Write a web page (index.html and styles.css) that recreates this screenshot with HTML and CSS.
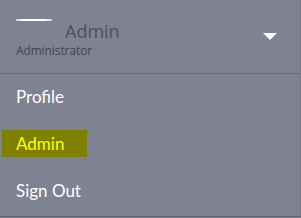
FILE: index.html
```html
<!DOCTYPE html>
<html lang="en">
<head>
  <meta charset="UTF-8" />
  <title>User menu</title>
  <link rel="stylesheet" href="styles.css">
</head>
<body>
<div class="user-menu">
  <div class="user-head">
    <div class="user-row">
      <span class="avatar"></span>
      <span class="user-name">Admin</span>
      <span class="caret"></span>
    </div>
    <div class="user-role">Administrator</div>
  </div>
  <ul class="menu">
    <li><a class="menu-link" href="#">Profile</a></li>
    <li><a class="menu-link active" href="#">Admin</a></li>
    <li><a class="menu-link" href="#">Sign Out</a></li>
  </ul>
</div>
</body>
</html>
```

FILE: styles.css
```css
body {
  margin: 0;
  padding: 0;
  background-color: #7f8290;
  font-family: 'Lato', 'Open Sans', sans-serif;
}
.user-menu {
  width: 300px;
  height: 216px;
  border-right: 1px solid #777a87;
  border-bottom: 1px solid #5e616c;
}
.user-head {
  height: 74px;
  box-sizing: border-box;
  padding: 19px 0 0 16px;
  border-bottom: 1px solid #686b77;
}
.user-row {
  display: flex;
  align-items: flex-start;
  height: 21px;
}
.avatar {
  width: 36px;
  height: 2px;
  background: linear-gradient(to right, #c9cbd2, #ffffff 20%, #ffffff 80%, #c9cbd2);
}
.user-name {
  margin: 0 0 0 13px;
  font-family: 'Open Sans', sans-serif;
  font-size: 18px;
  line-height: 24px;
  color: #4c5160;
  flex: 1;
}
.caret {
  margin: 14px 23px 0 0;
  width: 0;
  height: 0;
  border-left: 7px solid transparent;
  border-right: 7px solid transparent;
  border-top: 7px solid #ffffff;
}
.user-role {
  margin-top: 3px;
  font-family: 'Open Sans', sans-serif;
  font-size: 11.8px;
  line-height: 15px;
  color: #40454f;
}
.menu {
  list-style: none;
  margin: 0;
  padding: 9px 0 0 2px;
  display: flex;
  flex-direction: column;
  gap: 20px;
}
.menu-link {
  display: inline-block;
  height: 27px;
  line-height: 27px;
  padding: 0 23px 0 14px;
  font-size: 17px;
  color: #ffffff;
  text-decoration: none;
}
.menu-link.active {
  background-color: #808000;
  color: #ffff00;
}
```
